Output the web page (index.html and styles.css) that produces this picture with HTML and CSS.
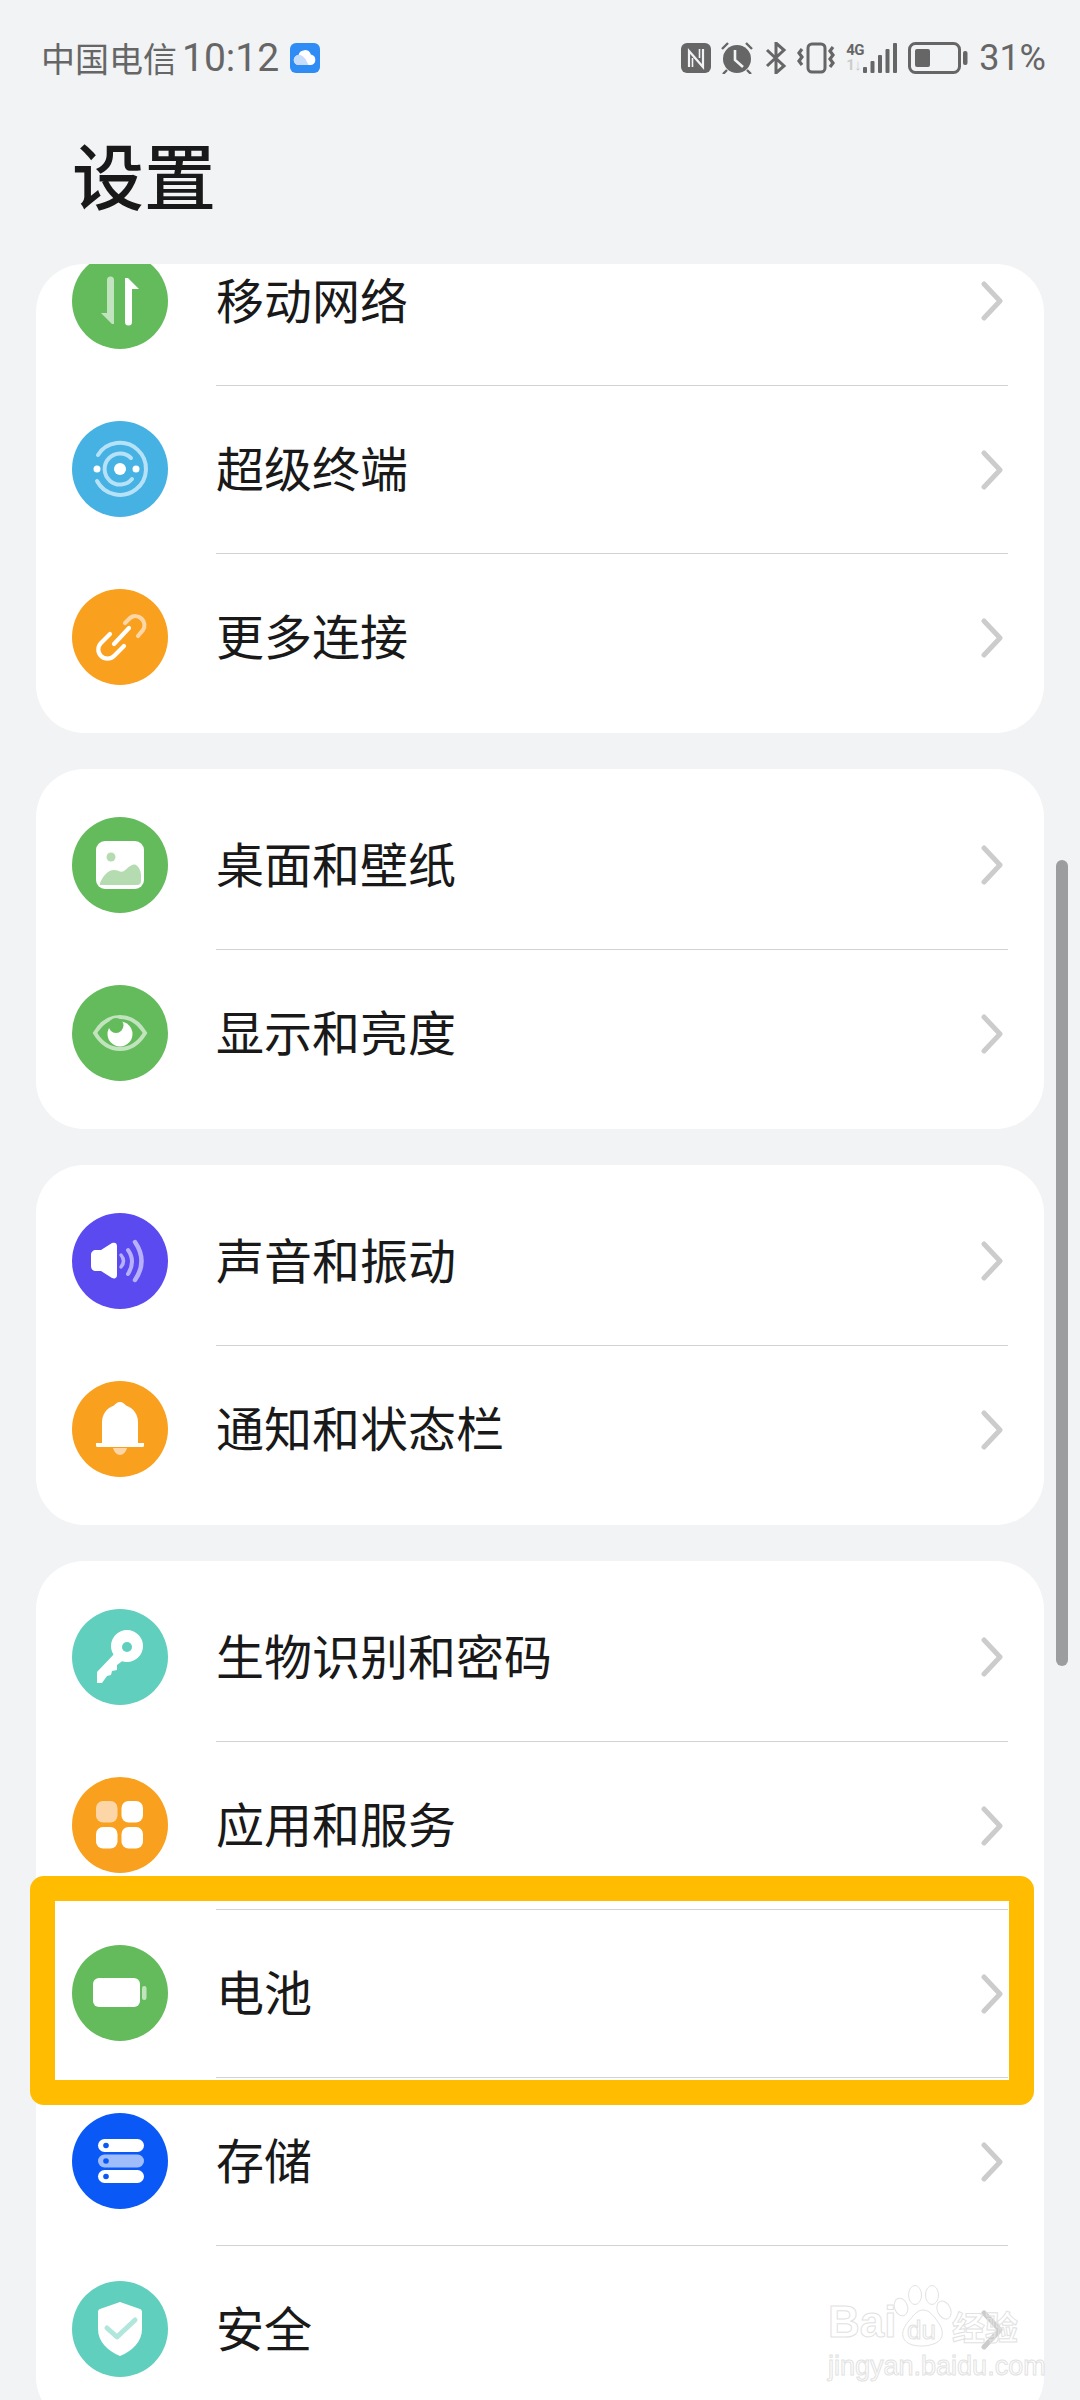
FILE: index.html
```html
<!DOCTYPE html>
<html lang="zh-CN">
<head>
<meta charset="utf-8">
<title>设置</title>
<link rel="stylesheet" href="styles.css">
</head>
<body>
<div class="screen">
  <header class="status">
    <div class="status-left">
      <span class="carrier">中国电信</span>
      <span class="time">10:12</span>
      <svg class="cloud" viewBox="0 0 30 30"><rect width="30" height="30" rx="6" fill="#2f8cf5"/><path d="M9 22a5 5 0 0 1-.5-10 6.500 6.500 0 0 1 12.400-.6A5.400 5.400 0 0 1 21 22z" fill="#fff"/><path d="M9 22a5 5 0 0 1-.5-10c2-.6 5 1 7 4l3 6z" fill="#c5dcfb"/></svg>
    </div>
    <div class="status-right">
      <svg class="si-n" viewBox="0 0 30 30"><rect width="30" height="30" rx="6" fill="#666"/><path d="M8 24V8l14 16V6" fill="none" stroke="#f1f3f5" stroke-width="2.200"/><path d="M11.500 15v9M18.500 15V6" fill="none" stroke="#f1f3f5" stroke-width="1.600"/></svg>
      <svg class="si-alarm" viewBox="0 0 32 32"><path d="M1 7l6-6M31 7l-6-6M6 28l-4 4M26 28l4 4" stroke="#666" stroke-width="2.400" fill="none"/><circle cx="16" cy="17" r="14" fill="#666"/><path d="M14 8v10l8 7" fill="none" stroke="#f1f3f5" stroke-width="2.600"/></svg>
      <svg class="si-bt" viewBox="0 0 22 32"><path d="M2 8l17 16-8 7V1l8 7L2 24" fill="none" stroke="#666" stroke-width="3"/></svg>
      <svg class="si-vib" viewBox="0 0 40 32"><rect x="11" y="2" width="17" height="28" rx="4" fill="none" stroke="#666" stroke-width="3"/><path d="M5 7L2 11l3 4-3 4 3 4M36 5l-3 4 3 4-3 4 3 4-3 4" fill="none" stroke="#666" stroke-width="3.200"/></svg>
      <div class="si-net">
        <div class="net-labels"><span class="net-4g">4G</span><span class="net-1">1↓</span></div>
        <svg class="si-signal" viewBox="0 0 34 30"><g fill="#666"><rect x="0" y="24" width="4" height="6" rx="1"/><rect x="7.500" y="18" width="4" height="12" rx="1"/><rect x="15" y="12" width="4" height="18" rx="1"/><rect x="22.500" y="6" width="4" height="24" rx="1"/><rect x="30" y="0" width="4" height="30" rx="1"/></g></svg>
      </div>
      <svg class="si-batt" viewBox="0 0 60 32"><rect x="1.500" y="1.500" width="50" height="29" rx="6" fill="none" stroke="#666" stroke-width="3"/><rect x="7" y="7" width="15" height="18" rx="2" fill="#666"/><rect x="55" y="9" width="4.500" height="14" rx="2" fill="#666"/></svg>
      <span class="pct">31%</span>
    </div>
  </header>

  <h1 class="title">设置</h1>

  <main class="scroller">
    <section class="card card-first">
      <div class="row">
        <svg class="ico" viewBox="0 0 96 96"><circle cx="48" cy="48" r="48" fill="#64bb5c"/><path d="M42 27a3.500 3.500 0 0 0-7 0v33h-6l11 11h2z" fill="#fff" opacity=".6"/><path d="M53 69a3.500 3.500 0 0 0 7 0V36h7L56 25h-3z" fill="#fff"/></svg>
        <div class="body"><span class="label">移动网络</span><svg class="chev" viewBox="0 0 24 40"><path d="M4 3l16 17L4 37" /></svg></div>
      </div>
      <div class="row">
        <svg class="ico" viewBox="0 0 96 96"><circle cx="48" cy="48" r="48" fill="#46b1e3"/><g fill="none" stroke="#b6e2f8" stroke-width="4" stroke-linecap="round"><path d="M26 34a26 26 0 1 1-1 26"/><path d="M59 37a15.500 15.500 0 1 0 1 21"/></g><g fill="#fff"><circle cx="48" cy="48" r="6"/><circle cx="25" cy="48" r="3.500"/><circle cx="64" cy="48" r="3.500"/></g></svg>
        <div class="body"><span class="label">超级终端</span><svg class="chev" viewBox="0 0 24 40"><path d="M4 3l16 17L4 37" /></svg></div>
      </div>
      <div class="row">
        <svg class="ico" viewBox="0 0 96 96"><circle cx="48" cy="48" r="48" fill="#f9a01e"/><g fill="none" stroke-width="4.200" stroke-linecap="round"><path d="M53 34l5-5a9 9 0 0 1 13 12l-5 6" stroke="#fdd6a8"/><path d="M38 45L29 54a9 9 0 0 0 13 13l10-10" stroke="#fff"/><path d="M42 55l15-16" stroke="#fff"/></g></svg>
        <div class="body"><span class="label">更多连接</span><svg class="chev" viewBox="0 0 24 40"><path d="M4 3l16 17L4 37" /></svg></div>
      </div>
    </section>

    <section class="card">
      <div class="row">
        <svg class="ico" viewBox="0 0 96 96"><circle cx="48" cy="48" r="48" fill="#64bb5c"/><rect x="24" y="24" width="48" height="48" rx="9" fill="#fff"/><circle cx="39" cy="40" r="4.500" fill="#b5dcb1"/><path d="M28 68v-2c3-7 8-13 14-13 4 0 7 3 10 1 4-3 8-8 12-6 3 2 5 6 5 10v6a4 4 0 0 1-4 4z" fill="#b5dcb1"/></svg>
        <div class="body"><span class="label">桌面和壁纸</span><svg class="chev" viewBox="0 0 24 40"><path d="M4 3l16 17L4 37" /></svg></div>
      </div>
      <div class="row">
        <svg class="ico" viewBox="0 0 96 96"><circle cx="48" cy="48" r="48" fill="#64bb5c"/><path d="M23 48c6-10 15-16 25-16s19 6 25 16c-6 10-15 16-25 16s-19-6-25-16z" fill="none" stroke="#c1e4be" stroke-width="4"/><circle cx="48" cy="49" r="12.500" fill="#fff"/><circle cx="44" cy="40.500" r="7.500" fill="#64bb5c"/></svg>
        <div class="body"><span class="label">显示和亮度</span><svg class="chev" viewBox="0 0 24 40"><path d="M4 3l16 17L4 37" /></svg></div>
      </div>
    </section>

    <section class="card">
      <div class="row">
        <svg class="ico" viewBox="0 0 96 96"><circle cx="48" cy="48" r="48" fill="#5a4af0"/><path d="M24 37h5l11-7c3-1 5 0 5 3v29c0 3-2 4-5 3l-11-7h-5c-3 0-5-2-5-5V42c0-3 2-5 5-5z" fill="#fff"/><g fill="none" stroke="#b8b0fb" stroke-linecap="round"><path d="M49 42q5 6 0 12" stroke-width="3.500"/><path d="M56 37q8 11 0 24" stroke-width="4"/><path d="M63 29q13 19 0 38" stroke-width="4.500"/></g></svg>
        <div class="body"><span class="label">声音和振动</span><svg class="chev" viewBox="0 0 24 40"><path d="M4 3l16 17L4 37" /></svg></div>
      </div>
      <div class="row">
        <svg class="ico" viewBox="0 0 96 96"><circle cx="48" cy="48" r="48" fill="#f9a01e"/><path d="M48 21c3 0 4.500 2 6 3.500 8 3 12 9 12 17V62h6v2.500a1.500 1.500 0 0 1-1.500 1.500h-45a1.500 1.500 0 0 1-1.500-1.500V62h6V41.500c0-8 4-14 12-17 1.500-1.500 3-3.500 6-3.500z" fill="#fff"/><path d="M41 67h14c-1 4-4 7-7 7s-6-3-7-7z" fill="#fdd6a8"/></svg>
        <div class="body"><span class="label">通知和状态栏</span><svg class="chev" viewBox="0 0 24 40"><path d="M4 3l16 17L4 37" /></svg></div>
      </div>
    </section>

    <section class="card">
      <div class="row">
        <svg class="ico" viewBox="0 0 96 96"><circle cx="48" cy="48" r="48" fill="#61cfbe"/><circle cx="55" cy="37" r="16" fill="#fff"/><path d="M25 63l19-20 9 7-8 6v5l-5 1-1 4-4 1-5 7h-5z" fill="#fff"/><circle cx="55" cy="38" r="5" fill="#61cfbe"/></svg>
        <div class="body"><span class="label">生物识别和密码</span><svg class="chev" viewBox="0 0 24 40"><path d="M4 3l16 17L4 37" /></svg></div>
      </div>
      <div class="row">
        <svg class="ico" viewBox="0 0 96 96"><circle cx="48" cy="48" r="48" fill="#f9a01e"/><rect x="24" y="24" width="21.500" height="21.500" rx="7" fill="#fdd6a8"/><rect x="49.500" y="24" width="21.500" height="21.500" rx="7" fill="#fff"/><rect x="24" y="50" width="21.500" height="21.500" rx="7" fill="#fff"/><rect x="49.500" y="50" width="21.500" height="21.500" rx="7" fill="#fff"/></svg>
        <div class="body"><span class="label">应用和服务</span><svg class="chev" viewBox="0 0 24 40"><path d="M4 3l16 17L4 37" /></svg></div>
      </div>
      <div class="row">
        <svg class="ico" viewBox="0 0 96 96"><circle cx="48" cy="48" r="48" fill="#64bb5c"/><rect x="21" y="33" width="47" height="29" rx="6" fill="#fff"/><rect x="70" y="41" width="4.500" height="14" rx="2.200" fill="#c1e4be"/></svg>
        <div class="body"><span class="label">电池</span><svg class="chev" viewBox="0 0 24 40"><path d="M4 3l16 17L4 37" /></svg></div>
      </div>
      <div class="row">
        <svg class="ico" viewBox="0 0 96 96"><circle cx="48" cy="48" r="48" fill="#0a59f7"/><rect x="26" y="26" width="46" height="13" rx="6.500" fill="#fff"/><rect x="26" y="41.500" width="46" height="13" rx="6.500" fill="#9fbdfb"/><rect x="26" y="57" width="46" height="13" rx="6.500" fill="#fff"/><g fill="#0a59f7"><circle cx="34" cy="32.500" r="2.800"/><circle cx="34" cy="48" r="2.800"/><circle cx="34" cy="63.500" r="2.800"/></g></svg>
        <div class="body"><span class="label">存储</span><svg class="chev" viewBox="0 0 24 40"><path d="M4 3l16 17L4 37" /></svg></div>
      </div>
      <div class="row">
        <svg class="ico" viewBox="0 0 96 96"><circle cx="48" cy="48" r="48" fill="#61cfbe"/><path d="M48 21l20 7c1.500.5 2 1.500 2 3v17c0 13-10 22-22 27-12-5-22-14-22-27V31c0-1.500.5-2.500 2-3z" fill="#fff"/><path d="M35 47l10 9 18-17" fill="none" stroke="#b0e6dc" stroke-width="5" stroke-linecap="round" stroke-linejoin="round"/></svg>
        <div class="body"><span class="label">安全</span><svg class="chev" viewBox="0 0 24 40"><path d="M4 3l16 17L4 37" /></svg></div>
      </div>
    </section>
  </main>

  <div class="scrollbar"></div>
  <div class="highlight"></div>

  <div class="watermark">
    <div class="wm-top">
      <span class="wm-bai">Bai</span>
      <div class="wm-paw">
        <svg viewBox="0 0 58 62"><g fill="#fff" stroke="#e2e2e2" stroke-width="1"><ellipse cx="7" cy="22" rx="6.500" ry="9" transform="rotate(-20 7 22)"/><ellipse cx="21" cy="10" rx="6.500" ry="9.500"/><ellipse cx="38" cy="10" rx="6.500" ry="9.500"/><ellipse cx="50" cy="25" rx="6.500" ry="9.500" transform="rotate(-25 50 25)"/><path d="M29 25c6 0 10 5 15 12 6 8 6 17-2 21-5 2-9 3-13 3s-10 0-15-3c-8-5-6-14 0-21 5-6 9-12 15-12z"/></g></svg>
        <span class="wm-du">du</span>
      </div>
      <span class="wm-jy">经验</span>
    </div>
    <div class="wm-url">jingyan.baidu.com</div>
  </div>
</div>
</body>
</html>
```

FILE: styles.css
```css
* { box-sizing: border-box; }

html, body {
  margin: 0;
  padding: 0;
}

body {
  background: #f1f3f5;
  font-family: "Noto Sans CJK SC", "Noto Sans", sans-serif;
}

.screen {
  position: relative;
  width: 1080px;
  height: 2400px;
  overflow: hidden;
  background: #f1f3f5;
  display: flex;
  flex-direction: column;
}

.status {
  height: 116px;
  padding: 0 34px 0 41px;
  display: flex;
  align-items: center;
  justify-content: space-between;
  color: #666;
}

.status-left,
.status-right {
  display: flex;
  align-items: center;
}

.carrier {
  font-size: 34px;
  line-height: 40px;
  letter-spacing: 0;
}

.time {
  font-family: "Roboto", "Liberation Sans", sans-serif;
  font-size: 39px;
  line-height: 40px;
  margin-left: 5px;
}

.cloud {
  width: 30px;
  height: 30px;
  margin-left: 11px;
}

.si-n { width: 30px; height: 30px; }
.si-alarm { width: 32px; height: 32px; margin-left: 10px; }
.si-bt { width: 22px; height: 32px; margin-left: 12px; }
.si-vib { width: 40px; height: 32px; margin-left: 10px; }

.si-net {
  display: flex;
  align-items: flex-end;
  margin-left: 9px;
  height: 30px;
}

.net-labels {
  display: flex;
  flex-direction: column;
  width: 17px;
  font-family: "Roboto", sans-serif;
  font-weight: 700;
  line-height: 15px;
  font-size: 15px;
  letter-spacing: -0.5px;
}

.net-4g { color: #666; }
.net-1 { color: #ccc; }

.si-signal { width: 34px; height: 30px; }
.si-batt { width: 60px; height: 32px; margin-left: 11px; }

.pct {
  font-family: "Roboto", "Liberation Sans", sans-serif;
  font-size: 36px;
  line-height: 40px;
  margin-left: 11px;
}

.title {
  margin: 0;
  height: 148px;
  padding: 15px 0 0 72px;
  font-size: 72px;
  line-height: 84px;
  font-weight: 500;
  color: #191919;
}

.scroller {
  flex: 1;
  margin: 0 36px;
  border-radius: 48px 48px 0 0;
  overflow: hidden;
  display: flex;
  flex-direction: column;
  gap: 36px;
}

.card {
  flex: none;
  background: #fff;
  border-radius: 48px;
  padding: 12px 0;
}

.card-first {
  margin-top: -59px;
}

.row {
  height: 168px;
  display: flex;
  align-items: center;
  padding-left: 36px;
  padding-right: 36px;
  gap: 48px;
}

.row + .row .body {
  border-top: 1px solid #d2d2d2;
}

.ico {
  flex: none;
  width: 96px;
  height: 96px;
}

.body {
  flex: 1;
  height: 168px;
  display: flex;
  align-items: center;
  justify-content: space-between;
  padding-right: 4px;
}

.label {
  font-size: 48px;
  line-height: 60px;
  margin-bottom: 7px;
  color: #191919;
}

.chev {
  width: 24px;
  height: 40px;
  fill: none;
  stroke: #cccccc;
  stroke-width: 5;
  stroke-linecap: round;
  stroke-linejoin: round;
}

.scrollbar {
  position: absolute;
  left: 1056px;
  top: 860px;
  width: 12px;
  height: 806px;
  border-radius: 6px;
  background: #9b9d9f;
}

.highlight {
  position: absolute;
  left: 30px;
  top: 1876px;
  width: 1004px;
  height: 229px;
  border: 25px solid #ffbc00;
  border-radius: 14px;
}

.watermark {
  position: absolute;
  left: 828px;
  top: 2285px;
  width: 196px;
  color: transparent;
  -webkit-text-stroke: 1px #e2e2e2;
}

.wm-top {
  display: flex;
  align-items: flex-end;
  height: 62px;
}

.wm-bai {
  font-family: "Liberation Sans", sans-serif;
  font-weight: 700;
  font-size: 44px;
  line-height: 50px;
  width: 66px;
}

.wm-paw {
  position: relative;
  width: 58px;
  height: 62px;
}

.wm-paw svg {
  display: block;
  width: 58px;
  height: 62px;
}

.wm-du {
  position: absolute;
  left: 13px;
  top: 30px;
  font-family: "Liberation Sans", sans-serif;
  font-size: 26px;
  line-height: 30px;
}

.wm-jy {
  font-size: 33px;
  line-height: 42px;
  white-space: nowrap;
  font-weight: 700;
}

.wm-url {
  font-family: "Liberation Sans", sans-serif;
  font-size: 27px;
  line-height: 30px;
  white-space: nowrap;
  margin-top: 4px;
}
```
